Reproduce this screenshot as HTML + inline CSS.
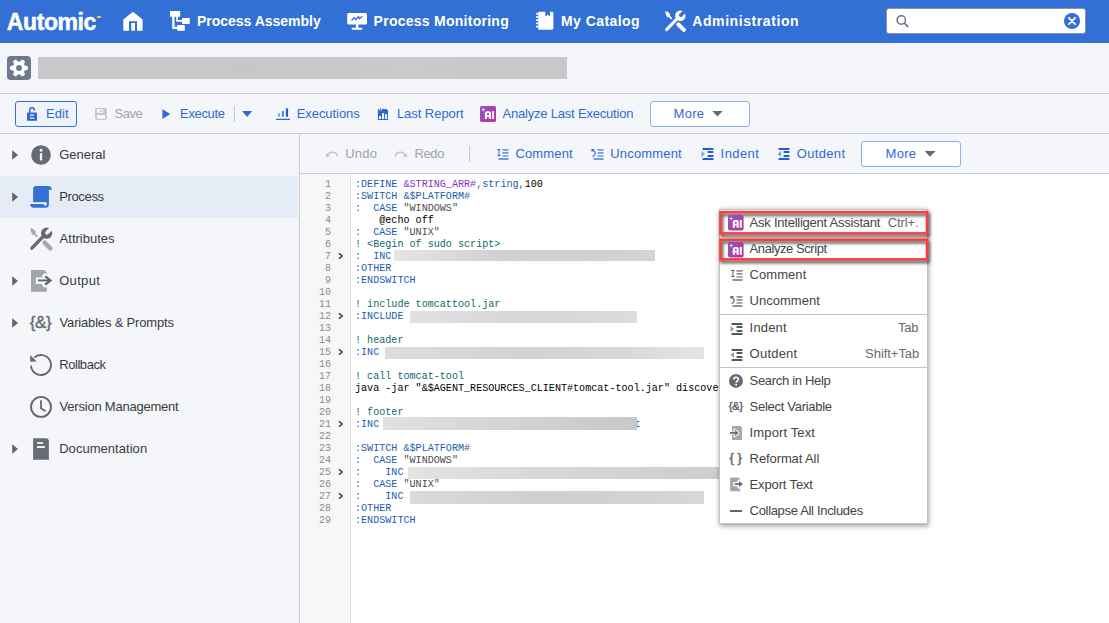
<!DOCTYPE html>
<html>
<head>
<meta charset="utf-8">
<title>Automic</title>
<style>
html,body{margin:0;padding:0;}
body{width:1109px;height:623px;overflow:hidden;position:relative;background:#f4f6fa;font-family:"Liberation Sans",sans-serif;font-size:13px;color:#333;}
.abs{position:absolute;}
svg{display:block;overflow:visible}
.t{position:absolute;white-space:nowrap;font-family:"Liberation Sans",sans-serif;}
#nav{left:0;top:0;width:1109px;height:43px;background:#3270d6;}
.ln{position:absolute;left:300px;width:31px;text-align:right;font-family:"Liberation Mono",monospace;font-size:10px;line-height:12px;color:#8c8c8c;}
.cl{position:absolute;left:355px;font-family:"Liberation Mono",monospace;font-size:10.1px;line-height:12px;white-space:pre;color:#000;}
.k{color:#1d5cab;} .v{color:#8a2fc0;} .c{color:#0d6b66;} .s{color:#4d4d4d;}

.sk3{-webkit-text-stroke:0.5px #fff}
.sk2{-webkit-text-stroke:0.45px currentColor}
.sk{-webkit-text-stroke:0.35px currentColor}
.hl{border:2.5px solid #f33d3d;box-sizing:border-box;box-shadow:1px 2px 2.5px rgba(0,0,0,0.5), inset 1.5px 2px 2.5px rgba(0,0,0,0.42);}
</style>
</head>
<body>
<div id="nav" class="abs"></div>
<div class="t sk3" style="left:6.80px;top:9.13px;font-size:23px;line-height:26px;color:#fff;font-weight:bold;letter-spacing:-0.40px;">Automic</div>
<div class="abs" style="left:97px;top:16px;width:3.5px;height:1.6px;background:#e8c94a"></div>
<svg class="abs" style="left:120px;top:8px" width="26" height="26" viewBox="0 0 26 26"><path d="M13 3.7 L3.3 11.5 V22.7 H9 V13.2 H17 V22.7 H22.6 V11.5 Z M11.2 15 H15 V22.7 H11.2 Z" fill="#fff" fill-rule="evenodd"/></svg>
<svg class="abs" style="left:168px;top:8px" width="24" height="26" viewBox="0 0 24 26"><g fill="#fff"><rect x="2" y="3" width="10.2" height="5.7" rx="0.6"/><rect x="14.1" y="10" width="7.7" height="5.9" rx="0.6"/><rect x="9.2" y="17" width="7.6" height="5.8" rx="0.6"/><path d="M4.2 8 H6.5 V18.8 H10 V20.9 H4.2 Z"/><path d="M8.3 8 H10 V12 H15 V13.7 H8.3 Z"/></g></svg>
<div class="t " style="left:197.00px;top:13.25px;font-size:14px;line-height:17px;color:#fff;font-weight:bold;letter-spacing:-0.02px;">Process Assembly</div>
<svg class="abs" style="left:345px;top:10px" width="24" height="22" viewBox="0 0 24 22"><g fill="#fff"><rect x="2.2" y="3" width="19.8" height="11.6" rx="1.5"/><rect x="11" y="14" width="2.4" height="4"/><rect x="6.7" y="17.8" width="10.6" height="2" rx="0.8"/></g><path d="M6.5 10.5 L9.3 7.6 L11 9.6 L13.3 6.6 L14.6 8.6 L17.3 6.2" fill="none" stroke="#3270d6" stroke-width="1.3"/></svg>
<div class="t " style="left:373.60px;top:13.25px;font-size:14px;line-height:17px;color:#fff;font-weight:bold;letter-spacing:0.26px;">Process Monitoring</div>
<svg class="abs" style="left:533px;top:9px" width="24" height="24" viewBox="0 0 24 24"><g fill="#fff"><path d="M5.2 2.8 H12.3 V7.4 L14.7 5.7 L17.1 7.4 V2.8 H19 Q20.4 2.8 20.4 4.2 V19.3 Q20.4 20.7 19 20.7 H5.2 Z"/><rect x="3" y="4" width="2" height="1.6"/><rect x="3" y="7.2" width="2" height="1.6"/><rect x="3" y="10.4" width="2" height="1.6"/><rect x="3" y="13.6" width="2" height="1.6"/><rect x="3" y="16.8" width="2" height="1.6"/></g></svg>
<div class="t " style="left:561.00px;top:13.25px;font-size:14px;line-height:17px;color:#fff;font-weight:bold;letter-spacing:0.44px;">My Catalog</div>
<svg class="abs" style="left:662.9px;top:8.9px" width="24.2" height="24.2" viewBox="0 0 26 26"><path d="M3.9 22.2 L14.6 11" fill="none" stroke="#fff" stroke-width="3.3" stroke-linecap="round"/><circle cx="18.6" cy="7.2" r="5.6" fill="#fff"/><g transform="rotate(-45 18.6 7.2)"><rect x="17.3" y="5.3" width="9" height="3.8" rx="1.9" fill="#3270d6"/></g><path d="M2.3 2.3 L5.8 3.2 L7.9 6.2 L7.1 7.1 L10 10 L8.7 11.3 L5.8 8.4 L4.8 9.2 L3 5.8 Z" fill="#fff"/><path d="M16.6 16.6 L22.4 22.4" fill="none" stroke="#fff" stroke-width="4.4" stroke-linecap="round"/></svg>
<div class="t " style="left:692.30px;top:13.25px;font-size:14px;line-height:17px;color:#fff;font-weight:bold;letter-spacing:0.58px;">Administration</div>
<div class="abs" style="left:886px;top:8px;width:200px;height:26px;background:#fff;border:1px solid #8d94a3;border-radius:3px;box-sizing:border-box"></div>
<svg class="abs" style="left:893px;top:12px" width="18" height="18" viewBox="0 0 18 18"><circle cx="8.3" cy="8" r="4.2" fill="none" stroke="#6b7385" stroke-width="1.5"/><path d="M11.4 11.2 L14.6 14.4" stroke="#6b7385" stroke-width="1.8" stroke-linecap="round"/></svg>
<svg class="abs" style="left:1063px;top:12px" width="18" height="18" viewBox="0 0 18 18"><circle cx="9" cy="9" r="8" fill="#3270d6"/><path d="M5.9 5.9 L12.1 12.1 M12.1 5.9 L5.9 12.1" stroke="#fff" stroke-width="1.9" stroke-linecap="round"/></svg>
<div class="abs" style="left:0;top:93px;width:1109px;height:1px;background:#c9ccd4"></div>
<svg class="abs" style="left:7px;top:56px" width="24" height="24" viewBox="0 0 24 24"><rect width="24" height="24" rx="3.8" fill="#6f798c"/><path d="M17.58 9.79 L20.56 10.47 L20.56 13.53 L17.58 14.21 L16.70 15.73 L17.61 18.65 L14.96 20.18 L12.88 17.94 L11.12 17.94 L9.04 20.18 L6.39 18.65 L7.30 15.73 L6.42 14.21 L3.44 13.53 L3.44 10.47 L6.42 9.79 L7.30 8.27 L6.39 5.35 L9.04 3.82 L11.12 6.06 L12.88 6.06 L14.96 3.82 L17.61 5.35 L16.70 8.27 Z" fill="#fff" stroke="#fff" stroke-width="0.7" stroke-linejoin="round"/><circle cx="12" cy="12" r="2.9" fill="#6f798c"/></svg>
<div class="abs" style="left:38px;top:57px;width:529px;height:22px;background:linear-gradient(90deg,#c9c9cb,#c6c7c9 40%,#cacacc 70%,#c7c7c9)"></div>
<div class="abs" style="left:0;top:133px;width:1109px;height:1px;background:#c9ccd4"></div>
<div class="abs" style="left:15px;top:101px;width:62px;height:26px;border:1px solid #3570d8;border-radius:3px;background:#eef3fc;box-sizing:border-box"></div>
<svg class="abs" style="left:24px;top:104px" width="16" height="18" viewBox="0 0 16 18"><path d="M5.75 8.8 V6.1 A2.3 2.3 0 0 1 10.35 6.1 V6.7" fill="none" stroke="#2f6ad2" stroke-width="1.5"/><path d="M3.6 8.6 H12.4 Q13 8.6 13 9.2 V16.2 Q13 16.8 12.4 16.8 H3.6 Q3 16.8 3 16.2 V9.2 Q3 8.6 3.6 8.6 Z M6 10.5 V11.7 H10.2 V10.5 Z M6 13.4 V14.7 H10.2 V13.4 Z" fill="#2f6ad2" fill-rule="evenodd"/></svg>
<div class="t " style="left:46.00px;top:105.50px;font-size:13px;line-height:16px;color:#2f6ad2;letter-spacing:0.10px;">Edit</div>
<svg class="abs" style="left:95px;top:108px" width="12" height="12" viewBox="0 0 12 12"><rect x="0.1" y="0" width="11.8" height="11.9" rx="1.8" fill="#c3c6cb"/><rect x="1.9" y="1" width="6.3" height="3.9" fill="#f6f8fb"/><rect x="5" y="2.1" width="1.9" height="1.8" fill="#bfc2c7"/><rect x="1.9" y="7.1" width="8.2" height="3.7" fill="#f6f8fb"/></svg>
<div class="t " style="left:114.60px;top:105.50px;font-size:13px;line-height:16px;color:#a2a3a6;letter-spacing:-0.53px;">Save</div>
<svg class="abs" style="left:161px;top:108px" width="11" height="12" viewBox="0 0 11 12"><path d="M1.4 1.2 L9.3 6 L1.4 10.9 Z" fill="#2f6ad2"/></svg>
<div class="t " style="left:180.10px;top:105.50px;font-size:13px;line-height:16px;color:#2f6ad2;letter-spacing:-0.35px;">Execute</div>
<div class="abs" style="left:234px;top:106px;width:1px;height:16px;background:#c4c7cf"></div>
<svg class="abs" style="left:241px;top:110px" width="12" height="8" viewBox="0 0 12 8"><path d="M1 1 H11.1 L6.05 7 Z" fill="#2f6ad2"/></svg>
<svg class="abs" style="left:275px;top:107px" width="16" height="14" viewBox="0 0 16 14"><rect x="2.9" y="6.2" width="2" height="3.6" rx="0.5" fill="#7aa0e4"/><rect x="6.9" y="4" width="2" height="5.8" rx="0.5" fill="#4a80dc"/><rect x="10.9" y="1.2" width="2.2" height="8.6" rx="0.5" fill="#1f5fd0"/><rect x="0.8" y="11.8" width="14.3" height="1.2" rx="0.4" fill="#2a66d2"/></svg>
<div class="t " style="left:296.70px;top:105.50px;font-size:13px;line-height:16px;color:#2f6ad2;letter-spacing:-0.06px;">Executions</div>
<svg class="abs" style="left:377px;top:108px" width="12" height="13" viewBox="0 0 12 13"><path d="M0.9 0.9 H1.8 A1.6 1.6 0 0 0 5 0.9 H9.4 L11 2.6 V11.9 H0.9 Z" fill="#2a66d4"/><rect x="3" y="0" width="0.85" height="2.2" fill="#2a66d4"/><g fill="#f4f6fa"><rect x="2" y="8.1" width="2.1" height="2.9"/><rect x="5" y="5.2" width="2.1" height="5.8"/><rect x="8.1" y="6.1" width="2" height="4.9"/></g></svg>
<div class="t " style="left:396.90px;top:105.50px;font-size:13px;line-height:16px;color:#2f6ad2;letter-spacing:-0.04px;">Last Report</div>
<svg class="abs" style="left:480px;top:106px" width="16" height="16" viewBox="0 0 16 16"><defs><linearGradient id="ag1" x1="0" y1="0.2" x2="1" y2="0.8"><stop offset="0" stop-color="#8f55c2"/><stop offset="1" stop-color="#b7349a"/></linearGradient></defs><rect width="16" height="16" rx="1.8" fill="url(#ag1)"/><path d="M3.3 1.7 L3.8 3.15 L5.25 3.65 L3.8 4.15 L3.3 5.6 L2.8 4.15 L1.35 3.65 L2.8 3.15 Z" fill="#fff"/><path d="M4.9 13.1 V7.4 Q4.9 5.2 7.1 5.2 H8.8 Q11 5.2 11 7.4 V13.1 H8.9 V10.8 H7 V13.1 Z M7 9.05 H8.9 V7.6 Q8.9 6.9 8.2 6.9 H7.7 Q7 6.9 7 7.6 Z M12.1 5.2 H14.1 V13.1 H12.1 Z" fill="#fff" fill-rule="evenodd"/></svg>
<div class="t " style="left:502.50px;top:105.50px;font-size:13px;line-height:16px;color:#2f6ad2;letter-spacing:-0.20px;">Analyze Last Execution</div>
<div class="abs" style="left:650px;top:101px;width:100px;height:26px;border:1px solid #8eb0ea;border-radius:3px;background:#fff;box-sizing:border-box"></div>
<div class="t " style="left:673.50px;top:105.50px;font-size:13px;line-height:16px;color:#2f6ad2;letter-spacing:0.30px;">More</div>
<svg class="abs" style="left:711px;top:110px" width="13" height="8" viewBox="0 0 13 8"><path d="M1.3 1 H11.6 L6.45 6.4 Z" fill="#666a72"/></svg>
<div class="abs" style="left:299px;top:134px;width:1px;height:489px;background:#c9ccd4"></div>
<div class="abs" style="left:0;top:176px;width:298px;height:42px;background:#e6ecf6"></div>
<svg class="abs" style="left:11px;top:149px" width="9" height="12" viewBox="0 0 9 12"><path d="M1.2 1.2 L7 6 L1.2 10.8 Z" fill="#62656b"/></svg>
<div class="t " style="left:59.20px;top:146.50px;font-size:13px;line-height:16px;color:#3a3a3a;letter-spacing:-0.02px;">General</div>
<svg class="abs" style="left:11px;top:191px" width="9" height="12" viewBox="0 0 9 12"><path d="M1.2 1.2 L7 6 L1.2 10.8 Z" fill="#62656b"/></svg>
<div class="t " style="left:59.20px;top:188.50px;font-size:13px;line-height:16px;color:#3a3a3a;letter-spacing:-0.35px;">Process</div>
<div class="t " style="left:59.60px;top:230.50px;font-size:13px;line-height:16px;color:#3a3a3a;letter-spacing:0.01px;">Attributes</div>
<svg class="abs" style="left:11px;top:275px" width="9" height="12" viewBox="0 0 9 12"><path d="M1.2 1.2 L7 6 L1.2 10.8 Z" fill="#62656b"/></svg>
<div class="t " style="left:59.20px;top:272.50px;font-size:13px;line-height:16px;color:#3a3a3a;letter-spacing:0.32px;">Output</div>
<svg class="abs" style="left:11px;top:317px" width="9" height="12" viewBox="0 0 9 12"><path d="M1.2 1.2 L7 6 L1.2 10.8 Z" fill="#62656b"/></svg>
<div class="t " style="left:59.60px;top:314.50px;font-size:13px;line-height:16px;color:#3a3a3a;letter-spacing:-0.18px;">Variables &amp; Prompts</div>
<div class="t " style="left:59.20px;top:356.50px;font-size:13px;line-height:16px;color:#3a3a3a;letter-spacing:-0.43px;">Rollback</div>
<div class="t " style="left:59.60px;top:398.50px;font-size:13px;line-height:16px;color:#3a3a3a;letter-spacing:-0.22px;">Version Management</div>
<svg class="abs" style="left:11px;top:443px" width="9" height="12" viewBox="0 0 9 12"><path d="M1.2 1.2 L7 6 L1.2 10.8 Z" fill="#62656b"/></svg>
<div class="t " style="left:59.20px;top:440.50px;font-size:13px;line-height:16px;color:#3a3a3a;letter-spacing:0.04px;">Documentation</div>
<svg class="abs" style="left:30px;top:144px" width="22" height="22" viewBox="0 0 22 22"><circle cx="11" cy="11" r="9.8" fill="#666971"/><rect x="9.9" y="9.2" width="2.3" height="7.2" fill="#f4f6fa"/><circle cx="11.05" cy="6.3" r="1.45" fill="#f4f6fa"/></svg>
<svg class="abs" style="left:26px;top:182px" width="30" height="30" viewBox="0 0 30 30"><path d="M7.1 20.2 V7 Q7.1 4.1 10 4.1 H22.6 Q25.4 4.1 26 7.7 H22.9 V22.3 Q22.9 25.8 19.4 25.8 H7.5 Q4.6 25.8 3.9 22 L3.9 20.2 Z" fill="#3270d6"/><rect x="3" y="20.2" width="16.3" height="1.8" fill="#f2f6fc"/><circle cx="19.3" cy="22.1" r="1.75" fill="#f2f6fc"/><circle cx="19.5" cy="22.6" r="0.9" fill="#a9c0ea"/></svg>
<svg class="abs" style="left:28px;top:226px" width="26" height="26" viewBox="0 0 26 26"><path d="M3.9 22.2 L14.6 11" fill="none" stroke="#666971" stroke-width="3.3" stroke-linecap="round"/><circle cx="18.6" cy="7.2" r="5.6" fill="#666971"/><g transform="rotate(-45 18.6 7.2)"><rect x="17.3" y="5.3" width="9" height="3.8" rx="1.9" fill="#f4f6fa"/></g><path d="M2.3 2.3 L5.8 3.2 L7.9 6.2 L7.1 7.1 L10 10 L8.7 11.3 L5.8 8.4 L4.8 9.2 L3 5.8 Z" fill="#a6a8ad"/><path d="M16.6 16.6 L22.4 22.4" fill="none" stroke="#a6a8ad" stroke-width="4.4" stroke-linecap="round"/></svg>
<svg class="abs" style="left:26px;top:266px" width="30" height="30" viewBox="0 0 30 30"><path d="M5.05 4.1 H18.4 L20.9 7 V25.8 H5.05 Z" fill="#a2a5aa"/><rect x="9.9" y="11.3" width="8" height="6.7" fill="#f4f6fa"/><path d="M19.3 10.3 L24.6 14.4 L19.3 18.5" fill="none" stroke="#f4f6fa" stroke-width="6" stroke-linejoin="round" stroke-linecap="round"/><path d="M12 14.4 H23.6" fill="none" stroke="#62656e" stroke-width="1.8"/><path d="M19.3 10.3 L24.4 14.4 L19.3 18.5" fill="none" stroke="#62656e" stroke-width="2.3"/></svg>
<div class="t sk" style="left:29.80px;top:312.71px;font-size:17px;line-height:20px;color:#666971;letter-spacing:-0.45px;">{&amp;}</div>
<svg class="abs" style="left:26px;top:350px" width="30" height="30" viewBox="0 0 30 30"><path d="M5 15.6 A10 10 0 1 0 8.2 7.6" fill="none" stroke="#666971" stroke-width="1.9"/><path d="M4.2 5 L4.2 11.7 L10.6 11.5 Z" fill="#666971"/></svg>
<svg class="abs" style="left:26px;top:392px" width="30" height="30" viewBox="0 0 30 30"><circle cx="15" cy="14.9" r="10" fill="none" stroke="#666971" stroke-width="1.9"/><path d="M15 8.2 V16.3 L19.6 19.2" fill="none" stroke="#666971" stroke-width="1.8"/></svg>
<svg class="abs" style="left:26px;top:434px" width="30" height="30" viewBox="0 0 30 30"><path d="M7.1 4.2 H19.6 Q22.9 4.2 22.9 7.6 V25.8 H7.1 Z" fill="#696c75"/><rect x="11" y="8.2" width="6.1" height="1.7" fill="#f4f6fa"/><rect x="11" y="12.1" width="8" height="1.9" fill="#f4f6fa"/></svg>
<div class="abs" style="left:300px;top:173px;width:809px;height:1px;background:#c9ccd4"></div>
<svg class="abs" style="left:325px;top:148px" width="14" height="12" viewBox="0 0 14 12"><path d="M2.3 8.4 A5.25 5.25 0 0 1 12.6 8.6" fill="none" stroke="#c3c6cb" stroke-width="1.35"/><path d="M0.8 9.6 L1 4.9 L5 8.2 Z" fill="#c3c6cb"/></svg>
<div class="t " style="left:345.20px;top:145.50px;font-size:13px;line-height:16px;color:#a2a3a6;letter-spacing:0.20px;">Undo</div>
<svg class="abs" style="left:394px;top:148px" width="14" height="12" viewBox="0 0 14 12"><path d="M1.2 8.6 A5.25 5.25 0 0 1 11.5 8.4" fill="none" stroke="#c3c6cb" stroke-width="1.35"/><path d="M13 9.6 L12.8 4.9 L8.8 8.2 Z" fill="#c3c6cb"/></svg>
<div class="t " style="left:414.40px;top:145.50px;font-size:13px;line-height:16px;color:#a2a3a6;letter-spacing:-0.37px;">Redo</div>
<div class="abs" style="left:469px;top:146px;width:1px;height:16px;background:#c4c7cf"></div>
<svg class="abs" style="left:495.5px;top:148px" width="14" height="13" viewBox="0 0 14 13"><g fill="#2462d2"><rect x="1.3" y="0.9" width="3.2" height="1" rx="0.4"/><rect x="2.45" y="1" width="0.95" height="7"/><rect x="1.3" y="7.1" width="3.2" height="1" rx="0.4"/></g><g fill="#6d9ae3"><rect x="6.5" y="1.05" width="6" height="1.7" rx="0.3"/><rect x="6.5" y="4.1" width="6" height="1.7" rx="0.3"/><rect x="6.5" y="7.15" width="6" height="1.7" rx="0.3"/><rect x="2.5" y="10.1" width="10" height="1.8" rx="0.3"/></g></svg>
<div class="t " style="left:515.40px;top:145.50px;font-size:13px;line-height:16px;color:#2f6ad2;letter-spacing:0.15px;">Comment</div>
<svg class="abs" style="left:590.5px;top:148px" width="14" height="13" viewBox="0 0 14 13"><path d="M0.6 1.5 H3.4 M1 1.2 V3.4" fill="none" stroke="#2462d2" stroke-width="1.1"/><path d="M1.2 2.6 Q4.6 3.2 4.1 5.8 Q3.6 7.6 1.6 8.7" fill="none" stroke="#2462d2" stroke-width="1.1"/><g fill="#6d9ae3"><rect x="6.5" y="1.05" width="6" height="1.7" rx="0.3"/><rect x="6.5" y="4.1" width="6" height="1.7" rx="0.3"/><rect x="6.5" y="7.15" width="6" height="1.7" rx="0.3"/><rect x="2.5" y="10.1" width="10" height="1.8" rx="0.3"/></g></svg>
<div class="t " style="left:610.30px;top:145.50px;font-size:13px;line-height:16px;color:#2f6ad2;letter-spacing:0.16px;">Uncomment</div>
<svg class="abs" style="left:700.5px;top:147px" width="14" height="14" viewBox="0 0 14 14"><g fill="#1f5fd0"><rect x="1.5" y="1" width="11" height="1.9" rx="0.6"/><rect x="6.5" y="4.1" width="6" height="1.8" rx="0.6"/><rect x="6.5" y="8.1" width="6" height="1.8" rx="0.6"/><rect x="1.5" y="11.1" width="11" height="1.9" rx="0.6"/></g><path d="M0.5 3.9 L4 7 L0.5 10 Z" fill="#7ba3e6"/></svg>
<div class="t " style="left:720.60px;top:145.50px;font-size:13px;line-height:16px;color:#2f6ad2;letter-spacing:0.42px;">Indent</div>
<svg class="abs" style="left:776.5px;top:147px" width="14" height="14" viewBox="0 0 14 14"><g fill="#1f5fd0"><rect x="1.5" y="1" width="11" height="1.9" rx="0.6"/><rect x="6.5" y="4.1" width="6" height="1.8" rx="0.6"/><rect x="6.5" y="8.1" width="6" height="1.8" rx="0.6"/><rect x="1.5" y="11.1" width="11" height="1.9" rx="0.6"/></g><path d="M4 3.9 L0.5 7 L4 10 Z" fill="#7ba3e6"/></svg>
<div class="t " style="left:796.80px;top:145.50px;font-size:13px;line-height:16px;color:#2f6ad2;letter-spacing:0.33px;">Outdent</div>
<div class="abs" style="left:861px;top:141px;width:100px;height:26px;border:1px solid #8eb0ea;border-radius:3px;background:#fff;box-sizing:border-box"></div>
<div class="t " style="left:885.50px;top:145.50px;font-size:13px;line-height:16px;color:#2f6ad2;letter-spacing:0.30px;">More</div>
<svg class="abs" style="left:923px;top:150px" width="14" height="8" viewBox="0 0 14 8"><path d="M1.6 1 H12.5 L7.05 6.8 Z" fill="#666a72"/></svg>
<div class="abs" style="left:300px;top:174px;width:809px;height:449px;background:#fff"></div>
<div class="abs" style="left:300px;top:174px;width:50px;height:449px;background:#f7f7f7"></div>
<div class="abs" style="left:350px;top:174px;width:1px;height:449px;background:#ddd"></div>
<div class="ln" style="top:179px">1</div>
<div class="cl" style="top:179px"><span class="k">:DEFINE </span><span class="v">&amp;STRING_ARR#</span><span class="k">,string,</span>100</div>
<div class="ln" style="top:191px">2</div>
<div class="cl" style="top:191px"><span class="k">:SWITCH &amp;$PLATFORM#</span></div>
<div class="ln" style="top:203px">3</div>
<div class="cl" style="top:203px"><span class="k">:  CASE </span><span class="s">&quot;WINDOWS&quot;</span></div>
<div class="ln" style="top:215px">4</div>
<div class="cl" style="top:215px">    @echo off</div>
<div class="ln" style="top:227px">5</div>
<div class="cl" style="top:227px"><span class="k">:  CASE </span><span class="s">&quot;UNIX&quot;</span></div>
<div class="ln" style="top:239px">6</div>
<div class="cl" style="top:239px"><span class="c">! &lt;Begin of sudo script&gt;</span></div>
<div class="ln" style="top:251px">7</div>
<svg class="abs" style="left:337px;top:252px" width="8" height="9" viewBox="0 0 8 9"><path d="M1.9 1.4 L5.2 4.0 L1.9 6.6" fill="none" stroke="#3c3c3c" stroke-width="1.4"/></svg>
<div class="cl" style="top:251px"><span class="k">:  INC</span></div>
<div class="ln" style="top:263px">8</div>
<div class="cl" style="top:263px"><span class="k">:OTHER</span></div>
<div class="ln" style="top:275px">9</div>
<div class="cl" style="top:275px"><span class="k">:ENDSWITCH</span></div>
<div class="ln" style="top:287px">10</div>
<div class="ln" style="top:299px">11</div>
<div class="cl" style="top:299px"><span class="c">! include tomcattool.jar</span></div>
<div class="ln" style="top:311px">12</div>
<svg class="abs" style="left:337px;top:312px" width="8" height="9" viewBox="0 0 8 9"><path d="M1.9 1.4 L5.2 4.0 L1.9 6.6" fill="none" stroke="#3c3c3c" stroke-width="1.4"/></svg>
<div class="cl" style="top:311px"><span class="k">:INCLUDE</span></div>
<div class="ln" style="top:323px">13</div>
<div class="ln" style="top:335px">14</div>
<div class="cl" style="top:335px"><span class="c">! header</span></div>
<div class="ln" style="top:347px">15</div>
<svg class="abs" style="left:337px;top:348px" width="8" height="9" viewBox="0 0 8 9"><path d="M1.9 1.4 L5.2 4.0 L1.9 6.6" fill="none" stroke="#3c3c3c" stroke-width="1.4"/></svg>
<div class="cl" style="top:347px"><span class="k">:INC</span></div>
<div class="ln" style="top:359px">16</div>
<div class="ln" style="top:371px">17</div>
<div class="cl" style="top:371px"><span class="c">! call tomcat-tool</span></div>
<div class="ln" style="top:383px">18</div>
<div class="cl" style="top:383px">java -jar &quot;&amp;$AGENT_RESOURCES_CLIENT#tomcat-tool.jar&quot; discover</div>
<div class="ln" style="top:395px">19</div>
<div class="ln" style="top:407px">20</div>
<div class="cl" style="top:407px"><span class="c">! footer</span></div>
<div class="ln" style="top:419px">21</div>
<svg class="abs" style="left:337px;top:420px" width="8" height="9" viewBox="0 0 8 9"><path d="M1.9 1.4 L5.2 4.0 L1.9 6.6" fill="none" stroke="#3c3c3c" stroke-width="1.4"/></svg>
<div class="cl" style="top:419px"><span class="k">:INC</span></div>
<div class="ln" style="top:431px">22</div>
<div class="ln" style="top:443px">23</div>
<div class="cl" style="top:443px"><span class="k">:SWITCH &amp;$PLATFORM#</span></div>
<div class="ln" style="top:455px">24</div>
<div class="cl" style="top:455px"><span class="k">:  CASE </span><span class="s">&quot;WINDOWS&quot;</span></div>
<div class="ln" style="top:467px">25</div>
<svg class="abs" style="left:337px;top:468px" width="8" height="9" viewBox="0 0 8 9"><path d="M1.9 1.4 L5.2 4.0 L1.9 6.6" fill="none" stroke="#3c3c3c" stroke-width="1.4"/></svg>
<div class="cl" style="top:467px"><span class="k">:    INC</span></div>
<div class="ln" style="top:479px">26</div>
<div class="cl" style="top:479px"><span class="k">:  CASE </span><span class="s">&quot;UNIX&quot;</span></div>
<div class="ln" style="top:491px">27</div>
<svg class="abs" style="left:337px;top:492px" width="8" height="9" viewBox="0 0 8 9"><path d="M1.9 1.4 L5.2 4.0 L1.9 6.6" fill="none" stroke="#3c3c3c" stroke-width="1.4"/></svg>
<div class="cl" style="top:491px"><span class="k">:    INC</span></div>
<div class="ln" style="top:503px">28</div>
<div class="cl" style="top:503px"><span class="k">:OTHER</span></div>
<div class="ln" style="top:515px">29</div>
<div class="cl" style="top:515px"><span class="k">:ENDSWITCH</span></div>
<div class="abs" style="left:394px;top:250px;width:260.5px;height:10.699999999999989px;background:linear-gradient(90deg,#e5e5e5,#d1d1d1 40%,#d0d0d0 70%,#d4d4d4)"></div>
<div class="abs" style="left:410px;top:311px;width:227px;height:12.399999999999977px;background:linear-gradient(90deg,#e1e1e3,#d7d7d9 45%,#d9d9db 80%,#dcdcde)"></div>
<div class="abs" style="left:385px;top:347.3px;width:318.70000000000005px;height:12.099999999999966px;background:linear-gradient(90deg,#dddddd,#d2d2d2 45%,#d8d8d8 75%,#e5e5e5)"></div>
<div class="cl k" style="left:634.5px;top:419px">t</div>
<div class="abs" style="left:383.4px;top:417.4px;width:253.60000000000002px;height:12.600000000000023px;background:linear-gradient(90deg,#e1e1e1,#d6d6d6 40%,#cecece 75%,#c8c8c8)"></div>
<div class="abs" style="left:408.3px;top:467px;width:321.7px;height:11.800000000000011px;background:linear-gradient(90deg,#e3e3e3,#d8d8d8 40%,#d0d0d0 80%,#cdcdcd)"></div>
<div class="abs" style="left:410.2px;top:491.2px;width:293.50000000000006px;height:12.600000000000023px;background:linear-gradient(90deg,#dadada,#cfcfcf 45%,#d2d2d2 75%,#d7d7d7)"></div>
<div class="abs" style="left:719px;top:209px;width:209px;height:315px;background:#fff;border:1px solid #c2c2c2;box-sizing:border-box;box-shadow:0 1.5px 5px 0.5px rgba(0,0,0,0.4)"></div>
<svg class="abs" style="left:700px;top:200px" width="250" height="80" viewBox="0 0 250 80"><defs><filter id="rds" x="-10%" y="-30%" width="120%" height="180%"><feDropShadow dx="1.3" dy="2.4" stdDeviation="1.7" flood-color="#000" flood-opacity="0.75"/></filter></defs><g fill="none" stroke="#f53f3f" stroke-width="2.6" filter="url(#rds)"><rect x="20.5" y="12.2" width="206.6" height="21.2"/><rect x="20.5" y="39.7" width="206.6" height="19.7"/></g></svg>
<svg class="abs" style="left:728.1px;top:215.1px" width="15.6" height="15.6" viewBox="0 0 16 16"><defs><linearGradient id="ag2" x1="0" y1="0.2" x2="1" y2="0.8"><stop offset="0" stop-color="#8f55c2"/><stop offset="1" stop-color="#b7349a"/></linearGradient></defs><rect width="16" height="16" rx="1.8" fill="url(#ag2)"/><path d="M3.3 1.7 L3.8 3.15 L5.25 3.65 L3.8 4.15 L3.3 5.6 L2.8 4.15 L1.35 3.65 L2.8 3.15 Z" fill="#fff"/><path d="M4.9 13.1 V7.4 Q4.9 5.2 7.1 5.2 H8.8 Q11 5.2 11 7.4 V13.1 H8.9 V10.8 H7 V13.1 Z M7 9.05 H8.9 V7.6 Q8.9 6.9 8.2 6.9 H7.7 Q7 6.9 7 7.6 Z M12.1 5.2 H14.1 V13.1 H12.1 Z" fill="#fff" fill-rule="evenodd"/></svg>
<div class="t " style="left:749.60px;top:214.50px;font-size:13px;line-height:16px;color:#444;letter-spacing:-0.24px;">Ask Intelligent Assistant</div>
<div class="t" style="right:190.4px;top:214.50px;font-size:13px;line-height:16px;color:#6a6a6a;letter-spacing:-0.08px">Ctrl+.</div>
<svg class="abs" style="left:728.1px;top:241.6px" width="15.6" height="15.6" viewBox="0 0 16 16"><defs><linearGradient id="ag3" x1="0" y1="0.2" x2="1" y2="0.8"><stop offset="0" stop-color="#8f55c2"/><stop offset="1" stop-color="#b7349a"/></linearGradient></defs><rect width="16" height="16" rx="1.8" fill="url(#ag3)"/><path d="M3.3 1.7 L3.8 3.15 L5.25 3.65 L3.8 4.15 L3.3 5.6 L2.8 4.15 L1.35 3.65 L2.8 3.15 Z" fill="#fff"/><path d="M4.9 13.1 V7.4 Q4.9 5.2 7.1 5.2 H8.8 Q11 5.2 11 7.4 V13.1 H8.9 V10.8 H7 V13.1 Z M7 9.05 H8.9 V7.6 Q8.9 6.9 8.2 6.9 H7.7 Q7 6.9 7 7.6 Z M12.1 5.2 H14.1 V13.1 H12.1 Z" fill="#fff" fill-rule="evenodd"/></svg>
<div class="t " style="left:749.60px;top:240.50px;font-size:13px;line-height:16px;color:#444;letter-spacing:-0.43px;">Analyze Script</div>
<svg class="abs" style="left:729.6px;top:268.6px" width="14" height="13" viewBox="0 0 14 13"><g fill="#50535b"><rect x="1.3" y="0.9" width="3.2" height="1" rx="0.4"/><rect x="2.45" y="1" width="0.95" height="7"/><rect x="1.3" y="7.1" width="3.2" height="1" rx="0.4"/></g><g fill="#8f9196"><rect x="6.5" y="1.05" width="6" height="1.7" rx="0.3"/><rect x="6.5" y="4.1" width="6" height="1.7" rx="0.3"/><rect x="6.5" y="7.15" width="6" height="1.7" rx="0.3"/><rect x="2.5" y="10.1" width="10" height="1.8" rx="0.3"/></g></svg>
<div class="t " style="left:749.60px;top:266.50px;font-size:13px;line-height:16px;color:#444;letter-spacing:0.05px;">Comment</div>
<svg class="abs" style="left:729.6px;top:294.6px" width="14" height="13" viewBox="0 0 14 13"><path d="M0.6 1.5 H3.4 M1 1.2 V3.4" fill="none" stroke="#50535b" stroke-width="1.1"/><path d="M1.2 2.6 Q4.6 3.2 4.1 5.8 Q3.6 7.6 1.6 8.7" fill="none" stroke="#50535b" stroke-width="1.1"/><g fill="#8f9196"><rect x="6.5" y="1.05" width="6" height="1.7" rx="0.3"/><rect x="6.5" y="4.1" width="6" height="1.7" rx="0.3"/><rect x="6.5" y="7.15" width="6" height="1.7" rx="0.3"/><rect x="2.5" y="10.1" width="10" height="1.8" rx="0.3"/></g></svg>
<div class="t " style="left:749.60px;top:292.50px;font-size:13px;line-height:16px;color:#444;letter-spacing:0.02px;">Uncomment</div>
<div class="abs" style="left:720px;top:314px;width:207px;height:1px;background:#c4c4c4"></div>
<svg class="abs" style="left:729.6px;top:321.5px" width="14" height="14" viewBox="0 0 14 14"><g fill="#55575b"><rect x="1.5" y="1" width="11" height="1.9" rx="0.6"/><rect x="6.5" y="4.1" width="6" height="1.8" rx="0.6"/><rect x="6.5" y="8.1" width="6" height="1.8" rx="0.6"/><rect x="1.5" y="11.1" width="11" height="1.9" rx="0.6"/></g><path d="M0.5 3.9 L4 7 L0.5 10 Z" fill="#9a9a9a"/></svg>
<div class="t " style="left:749.60px;top:319.50px;font-size:13px;line-height:16px;color:#444;letter-spacing:0.18px;">Indent</div>
<div class="t" style="right:190.6px;top:319.50px;font-size:13px;line-height:16px;color:#6a6a6a;letter-spacing:-0.20px">Tab</div>
<svg class="abs" style="left:729.6px;top:347.5px" width="14" height="14" viewBox="0 0 14 14"><g fill="#55575b"><rect x="1.5" y="1" width="11" height="1.9" rx="0.6"/><rect x="6.5" y="4.1" width="6" height="1.8" rx="0.6"/><rect x="6.5" y="8.1" width="6" height="1.8" rx="0.6"/><rect x="1.5" y="11.1" width="11" height="1.9" rx="0.6"/></g><path d="M4 3.9 L0.5 7 L4 10 Z" fill="#9a9a9a"/></svg>
<div class="t " style="left:749.60px;top:345.50px;font-size:13px;line-height:16px;color:#444;letter-spacing:0.22px;">Outdent</div>
<div class="t" style="right:189.8px;top:345.50px;font-size:13px;line-height:16px;color:#6a6a6a;letter-spacing:-0.05px">Shift+Tab</div>
<div class="abs" style="left:720px;top:367px;width:207px;height:1px;background:#c4c4c4"></div>
<svg class="abs" style="left:728px;top:373px" width="16" height="16" viewBox="0 0 16 16"><circle cx="8" cy="7.9" r="7" fill="#686b73"/><path d="M5.7 6.5 Q5.7 4.2 8 4.2 Q10.3 4.2 10.3 6.2 Q10.3 7.4 9.1 8.1 Q8.1 8.7 8.1 9.7" fill="none" stroke="#fff" stroke-width="1.6"/><circle cx="8.1" cy="11.7" r="1" fill="#fff"/></svg>
<div class="t " style="left:749.60px;top:372.50px;font-size:13px;line-height:16px;color:#444;letter-spacing:-0.32px;">Search in Help</div>
<div class="t sk2" style="left:728.80px;top:399.09px;font-size:11px;line-height:14px;color:#62656e;letter-spacing:-0.10px;">{&amp;}</div>
<div class="t " style="left:749.60px;top:398.50px;font-size:13px;line-height:16px;color:#444;letter-spacing:-0.29px;">Select Variable</div>
<svg class="abs" style="left:724px;top:422px" width="24" height="24" viewBox="0 0 24 24"><path d="M8 4 H16.4 L17.9 5.6 V17.9 H8 Z" fill="#a4a7ac"/><path d="M8 10.9 H11 M10.8 7.9 L14.25 10.9 L10.8 13.9 Z" fill="#fff" stroke="#fff" stroke-width="2.6" stroke-linejoin="round"/><rect x="6" y="10.1" width="6" height="1.65" fill="#62656e"/><path d="M10.8 7.9 L14.25 10.9 L10.8 13.9 L11.8 10.9 Z" fill="#62656e" stroke="#62656e" stroke-width="0.5" stroke-linejoin="round"/></svg>
<div class="t " style="left:749.60px;top:424.50px;font-size:13px;line-height:16px;color:#444;letter-spacing:0.13px;">Import Text</div>
<div class="t sk2" style="left:729.60px;top:449.80px;font-size:13px;line-height:16px;color:#62656e;">{ }</div>
<div class="t " style="left:749.60px;top:450.50px;font-size:13px;line-height:16px;color:#444;letter-spacing:-0.10px;">Reformat All</div>
<svg class="abs" style="left:726.9px;top:475.4px" width="18.9" height="18.9" viewBox="0 0 30 30"><path d="M5.05 4.1 H18.4 L20.9 7 V25.8 H5.05 Z" fill="#a4a7ac"/><rect x="9.9" y="11.3" width="8" height="6.7" fill="#fff"/><path d="M19.3 10.3 L24.6 14.4 L19.3 18.5" fill="none" stroke="#fff" stroke-width="6" stroke-linejoin="round" stroke-linecap="round"/><path d="M12 14.4 H23.6" fill="none" stroke="#62656e" stroke-width="2.6"/><path d="M19.3 10.3 L24.4 14.4 L19.3 18.5" fill="#62656e" stroke="#62656e" stroke-width="1.2"/></svg>
<div class="t " style="left:749.60px;top:476.50px;font-size:13px;line-height:16px;color:#444;letter-spacing:-0.14px;">Export Text</div>
<div class="abs" style="left:729.7px;top:510px;width:12.3px;height:1.8px;background:#62656e"></div>
<div class="t " style="left:749.60px;top:502.50px;font-size:13px;line-height:16px;color:#444;letter-spacing:-0.32px;">Collapse All Includes</div>
</body>
</html>
